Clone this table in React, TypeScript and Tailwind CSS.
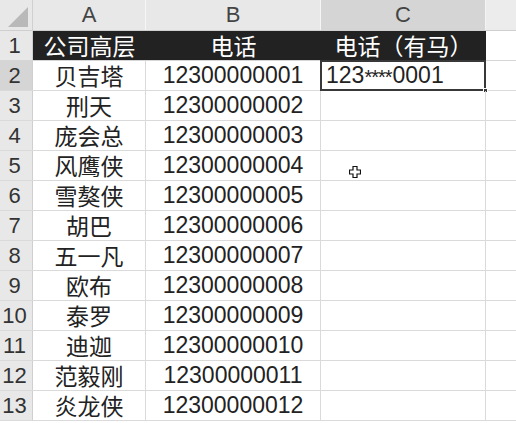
import React from "react";

const names = ["贝吉塔", "刑天", "庞会总", "风鹰侠", "雪獒侠", "胡巴", "五一凡", "欧布", "泰罗", "迪迦", "范毅刚", "炎龙侠"];

const cjk = { fontFamily: '"Noto Sans CJK SC", "Noto Sans", sans-serif' };
const num = { fontFamily: '"Liberation Sans", Arial, sans-serif' };

function Cursor() {
  return (
    <svg width="12" height="12" viewBox="0 0 12 12" className="absolute left-[349px] top-[166px]">
      <path d="M4 0.5 H8 V4 H11.5 V8 H8 V11.5 H4 V8 H0.5 V4 H4 Z" fill="#fff" stroke="#111" strokeWidth="1.2" />
    </svg>
  );
}

export default function App() {
  const cols = "grid-cols-[33px_113px_175px_165px_30px]";
  return (
    <div className="relative w-[516px] h-[423px] overflow-hidden bg-white text-[#222] leading-none">
      {/* column header row */}
      <div className={`grid ${cols} h-[31px] bg-[#e8e8e8] border-b border-[#cfcfcf]`}>
        <div className="relative border-r border-[#d0d0d0]">
          <svg width="20" height="20" viewBox="0 0 20 20" className="absolute right-[4px] bottom-[3px]">
            <path d="M20 0 L20 20 L0 20 Z" fill="#b9b9b9" />
          </svg>
        </div>
        {["A", "B"].map((c) => (
          <div key={c} className="flex items-center justify-center border-r border-[#f6f6f6] text-[22px] text-[#444]" style={num}>{c}</div>
        ))}
        <div className="flex items-center justify-center bg-[#d5d5d5] border-r border-[#f3f3f3] text-[22px] text-[#444]" style={num}>C</div>
        <div className="bg-[#ececec]" />
      </div>
      {/* row 1 */}
      <div className={`grid ${cols} h-[30px] border-b border-[#d6d6d6]`}>
        <div className="flex items-center justify-center bg-[#e8e8e8] border-r border-[#cfcfcf] text-[22px] text-[#333] pr-[3px]" style={num}>1</div>
        <div className="flex items-center justify-center bg-[#222] text-white text-[23px]" style={cjk}>公司高层</div>
        <div className="flex items-center justify-center bg-[#222] text-white text-[23px]" style={cjk}>电话</div>
        <div className="flex items-center justify-center bg-[#222] text-white text-[23px]" style={cjk}>电话（有马）</div>
        <div />
      </div>
      {names.map((n, i) => {
        const r = i + 2;
        const sel = r === 2;
        return (
          <div key={r} className={`grid ${cols} h-[30px] border-b border-[#dadada]`}>
            <div className={`flex items-center justify-center border-r border-[#cfcfcf] text-[22px] text-[#333] pr-[3px] ${sel ? "bg-[#d5d5d5]" : "bg-[#e8e8e8]"}`} style={num}>{r}</div>
            <div className="flex items-center justify-center border-r border-[#dadada] text-[23px]" style={cjk}>{n}</div>
            <div className="flex items-center justify-center border-r border-[#dadada] text-[23px]" style={num}>{`123000000${String(i + 1).padStart(2, "0")}`}</div>
            <div className="relative flex items-center border-r border-[#dadada] text-[23px] pl-[5px]" style={num}>
              {sel && (
                <>
                  <span>123</span>
                  <span className="text-[20px] tracking-[-1px] relative top-[1px]">****</span>
                  <span className="pl-[1px]">0001</span>
                  <div className="absolute -left-[1px] -top-[1px] -right-[1px] -bottom-[1px] border-2 border-[#383838]" />
                  <div className="absolute -right-[3px] -bottom-[3px] w-[5px] h-[5px] bg-[#383838] border border-white" />
                </>
              )}
            </div>
            <div />
          </div>
        );
      })}
      <Cursor />
    </div>
  );
}
